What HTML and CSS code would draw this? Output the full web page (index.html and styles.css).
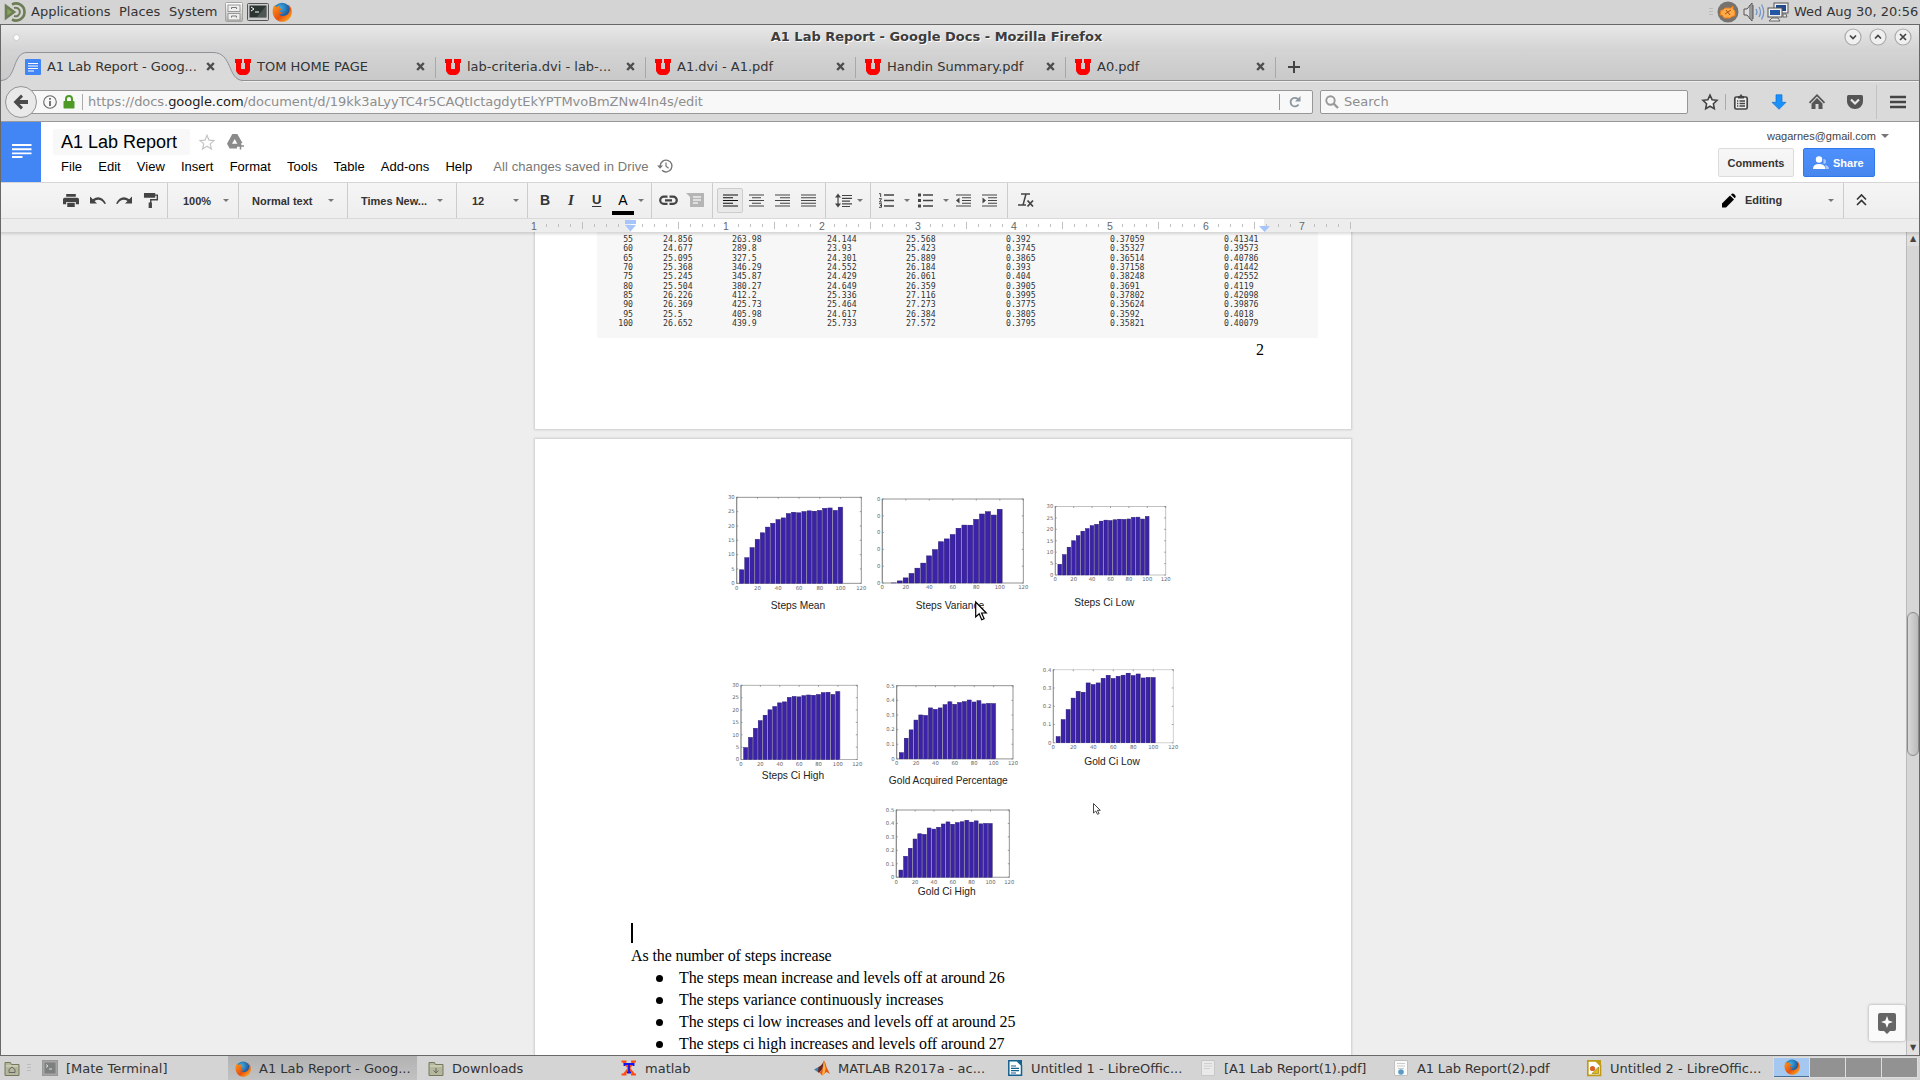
FILE: index.html
```html
<!DOCTYPE html>
<html lang="en">
<head>
<meta charset="utf-8">
<title>A1 Lab Report - Google Docs</title>
<link rel="stylesheet" href="styles.css">
</head>
<body>
<svg class="defs" width="0" height="0">
  <defs>
    <linearGradient id="steel" x1="0" y1="0" x2="0" y2="1"><stop offset="0" stop-color="#fff"/><stop offset="1" stop-color="#b5b5b0"/></linearGradient>
    <radialGradient id="globe" cx=".4" cy=".3" r=".7"><stop offset="0" stop-color="#3bb0ea"/><stop offset="1" stop-color="#153a7c"/></radialGradient>
    <linearGradient id="fox" x1="0" y1="0" x2="1" y2="1"><stop offset="0" stop-color="#ff9a1a"/><stop offset=".55" stop-color="#e8500f"/><stop offset="1" stop-color="#ffc62b"/></linearGradient>
    <symbol id="firefox" viewBox="0 0 20 20">
      <circle cx="10" cy="9.5" r="8.8" fill="url(#globe)"/>
      <path d="M2.2 3.2C.4 6 .1 10.500 1.500 13.800 3.200 17.800 6.500 19.800 10.300 19.800c5.500 0 9.500-4.300 9.500-9.600 0-3-1.200-5.800-3.400-7.600 1.300 2.400 1.400 4.400 1 6.200-.5 3-3 5.200-6 5.200-2.100 0-3.800-.9-4.600-2.300 1.500.8 3.300.3 4.500-.9-2.300.2-3.600-.8-3.900-2.200.9-.4 2-.5 2.300-1.300C8.700 6.600 7.300 6.200 6.800 5.600c.1-.9.4-1.600 1-2.200-1.300.2-2.300.8-3 1.600-.9-.1-2-.8-2.600-1.800z" fill="url(#fox)"/>
    </symbol>
    <symbol id="blocku" viewBox="0 0 16 16"><path d="M0 0h7v4H6v6h4V4H9V0h7v4h-1v8l-2 3-2 1H5l-2-1-2-3V4H0z" fill="#f00"/></symbol>
    <symbol id="close" viewBox="0 0 9 9"><path d="M1.200 1l6.600 7M7.800 1L1.200 8" stroke="#4d4d4d" stroke-width="2.400"/></symbol>
    <symbol id="folder" viewBox="0 0 16 16"><path d="M1 2.500h5.500l1 2H15v11H1z" fill="#b5b79c" stroke="#75785f"/><path d="M2 6h12" stroke="#dcddc8"/></symbol>
  </defs>
</svg>

<header class="panel">
  <svg class="mate" viewBox="0 0 20 20"><path d="M1 4l8 6-8 6z" fill="#87a556"/><path d="M1 4l8 6-8 6z M7 2.500A8.500 8.500 0 1 1 7 17.500" fill="none" stroke="#6d7d55" stroke-width="2.600"/><path d="M9 6a4.300 4.300 0 1 1 0 8" fill="none" stroke="#6d7d55" stroke-width="2"/></svg>
  <span class="m1">Applications</span><span class="m2">Places</span><span class="m3">System</span>
  <svg class="cab" viewBox="0 0 18 20"><rect x=".5" y=".5" width="17" height="19" rx="1" fill="url(#steel)" stroke="#a5a5a0"/><rect x="3" y="3" width="12" height="6.500" fill="#eee" stroke="#999"/><rect x="3" y="11.500" width="12" height="6.500" fill="#eee" stroke="#999"/><path d="M6.500 7V5.500h5V7M6.500 15.500V14h5v1.500" fill="none" stroke="#777"/></svg>
  <svg class="term" viewBox="0 0 22 18"><rect x=".5" y=".5" width="21" height="17" rx="1" fill="#ccc" stroke="#555"/><rect x="2.500" y="2.500" width="17" height="12" fill="#2b3532"/><path d="M4 4l3 2-3 2M8 9h4" stroke="#fff" fill="none"/><path d="M10 14L19 3v11z" fill="#4c5754"/></svg>
  <svg class="ff" width="20" height="20"><use href="#firefox"/></svg>
  <span class="grow"></span>
  <i class="grip"></i>
  <svg class="tray1" viewBox="0 0 22 22"><circle cx="11" cy="11" r="10.500" fill="#76736f"/><path d="M4 9h2l2-2h6l2-2v3l2 2v5h-2l-3 2H7l-2-3H3z" fill="#ffab4c" stroke="#f07c12"/><path d="M8 13l6-4M9 9l4 5" stroke="#a6520d"/></svg>
  <svg class="tray2" viewBox="0 0 22 20"><path d="M1 7h3l5-6v18l-5-6H1z" fill="#ddd" stroke="#555"/><path d="M7 3v14M10 3v14" stroke="#555"/><path d="M13 7q2 3 0 6M16 5q3 5 0 10M18.500 2.500q4.500 7.500 0 15" fill="none" stroke="#7395c8" stroke-width="1.300"/></svg>
  <svg class="tray3" viewBox="0 0 22 20"><rect x="7" y="1" width="14" height="10" fill="#eee" stroke="#555"/><rect x="9" y="3" width="10" height="6" fill="#1f4a8e"/><rect x="1" y="6" width="14" height="9" fill="#eee" stroke="#555"/><rect x="3" y="8" width="10" height="5" fill="#2157a5"/><path d="M5 16h6l2 3H2zM16 12h3l1 3h-4z" fill="#e8e8e8" stroke="#666"/></svg>
  <span class="clock">Wed Aug 30, 20:56</span>
</header>

<main class="window">
  <div class="chrome">
    <div class="titlebar">
      <i class="dot"></i>
      <h1>A1 Lab Report - Google Docs - Mozilla Firefox</h1>
      <div class="wbtns">
        <svg viewBox="0 0 18 18"><circle cx="9" cy="9" r="8" class="wb"/><path d="M6 7.500l3 3 3-3" class="wg"/></svg>
        <svg viewBox="0 0 18 18"><circle cx="9" cy="9" r="8" class="wb"/><path d="M6 10.500l3-3 3 3" class="wg"/></svg>
        <svg viewBox="0 0 18 18"><circle cx="9" cy="9" r="8" class="wb"/><path d="M6 6l6 6M12 6l-6 6" class="wg"/></svg>
      </div>
    </div>
    <div class="tabs">
      <svg class="tabshape" viewBox="0 0 242 30"><path d="M0 28.500C16 28 11 .5 26 .5H212C232 .5 226 28 242 28.500V30H0z" fill="#dadada"/><path d="M0 28.500C16 28 11 .5 26 .5H212C232 .5 226 28 242 28.500" fill="none" stroke="#8e9298"/></svg>
      <div class="tab first-tab"><svg class="fav" viewBox="0 0 16 16"><rect width="16" height="16" rx="1" fill="#4285f4"/><path d="M3 4.500h10M3 7h10M3 9.500h10M3 12h6" stroke="#fff"/></svg><span>A1 Lab Report - Goog...</span><svg class="x"><use href="#close"/></svg></div>
      <div class="tab"><svg class="fav"><use href="#blocku"/></svg><span>TOM HOME PAGE</span><svg class="x"><use href="#close"/></svg></div>
      <div class="tab sep"><svg class="fav"><use href="#blocku"/></svg><span>lab-criteria.dvi - lab-...</span><svg class="x"><use href="#close"/></svg></div>
      <div class="tab sep"><svg class="fav"><use href="#blocku"/></svg><span>A1.dvi - A1.pdf</span><svg class="x"><use href="#close"/></svg></div>
      <div class="tab sep"><svg class="fav"><use href="#blocku"/></svg><span>Handin Summary.pdf</span><svg class="x"><use href="#close"/></svg></div>
      <div class="tab sep"><svg class="fav"><use href="#blocku"/></svg><span>A0.pdf</span><svg class="x"><use href="#close"/></svg></div>
      <div class="tab sep plus"><svg viewBox="0 0 12 12"><path d="M6 0v12M0 6h12" stroke="#444" stroke-width="2"/></svg></div>
    </div>
  </div>

  <nav class="navbar">
    <svg class="back" viewBox="0 0 32 32"><circle cx="16" cy="16" r="15.500" fill="#e9e9e9" stroke="#939393"/><path d="M16 8.500L8.500 16l7.500 7.500 2-2.200-3.400-3.400H23v-3.800h-8.400L18 10.700z" fill="#4a4a4a"/></svg>
    <div class="url">
      <svg class="info" viewBox="0 0 14 14"><circle cx="7" cy="7" r="6.300" fill="none" stroke="#666" stroke-width="1.100"/><path d="M7 6v5M7 3v1.800" stroke="#555" stroke-width="1.600"/></svg>
      <svg class="lock" viewBox="0 0 12 14"><path d="M3 7V4q0-3 3-3t3 3v3" fill="none" stroke="#4d9a26" stroke-width="2"/><rect x=".5" y="6" width="11" height="7.500" rx=".8" fill="#4d9a26"/></svg>
      <i class="vline"></i>
      <span class="addr">https://docs.<b>google.com</b>/document/d/19kk3aLyyTC4r5CAQtIctagdytEkYPTMvoBmZNw4In4s/edit</span>
      <div class="reload"><svg viewBox="0 0 12 12"><path d="M9.500 8.500A4.300 4.300 0 1 1 8.800 3" fill="none" stroke="#8b969e" stroke-width="1.800"/><path d="M11.500 0v5.500H6z" fill="#8b969e"/></svg></div>
    </div>
    <div class="search"><svg viewBox="0 0 14 14"><circle cx="5.500" cy="5.500" r="4.200" fill="none" stroke="#999" stroke-width="1.900"/><path d="M8.500 8.500l4.500 4.500" stroke="#999" stroke-width="2.400"/></svg><span>Search</span></div>
    <div class="nicons">
      <svg class="n1" viewBox="0 0 16 16"><path d="M8 1.200l2.100 4.500 4.900.6-3.600 3.400.9 4.900L8 12.200l-4.300 2.400.9-4.900L1 6.300l4.900-.6z" fill="#eee" stroke="#444" stroke-width="1.600"/></svg>
      <i class="vline s1"></i>
      <svg class="n2" viewBox="0 0 16 16"><rect x="1.800" y="3" width="12.400" height="12" rx="1.500" fill="#eee" stroke="#444" stroke-width="1.700"/><path d="M5 4.500V2h1.500L8 0l1.500 2H11v2.500z" fill="#444"/><path d="M6.500 7H12M6.500 9.500H12M6.500 12H12M4 7h1.300M4 9.500h1.300M4 12h1.300" stroke="#444" stroke-width="1.300"/></svg>
      <svg class="n3" viewBox="0 0 16 16"><path d="M5 .8h6v7.500h4L8 15.300 1 8.300h4z" fill="#1990fa" stroke="#0c73d6" stroke-width=".7"/></svg>
      <svg class="n3" viewBox="0 0 16 16"><path d="M.5 8.800L8 1.200l7.500 7.600" fill="none" stroke="#555" stroke-width="1.800"/><path d="M2.500 9.500L8 4l5.500 5.500V15h-4v-5h-3v5h-4z" fill="#555"/></svg>
      <svg class="n3" viewBox="0 0 16 16"><path d="M1.500 1h13q1.500 0 1.500 1.500V7c0 4.500-3.500 8-8 8s-8-3.500-8-8V2.500Q0 1 1.500 1z" fill="#555"/><path d="M4 5.500l4 4 4-4" fill="none" stroke="#e6e6e6" stroke-width="2.200"/></svg>
      <i class="vline s2"></i>
      <svg class="n4" viewBox="0 0 16 16"><path d="M0 3h16M0 8h16M0 13h16" stroke="#444" stroke-width="2.700"/></svg>
    </div>
  </nav>

  <section class="docshead">
    <div class="logo"><svg viewBox="0 0 20 14"><path d="M0 1h19.500M0 5.200h19.500M0 9.400h19.500M0 13h10.500" stroke="#fff" stroke-width="1.900"/></svg></div>
    <div class="headmain">
      <div class="titlerow">
        <div class="doctitle">A1 Lab Report</div>
        <svg class="star" viewBox="0 0 16 16"><path d="M8 1.300l2 4.900 5 .4-3.800 3.300 1.200 5L8 12.200l-4.400 2.700 1.200-5L1 6.600l5-.4z" fill="none" stroke="#c4c4c4" stroke-width="1.200"/></svg>
        <svg class="drive" viewBox="0 0 18 16"><path d="M5.300 0h5L15.500 9H13v3h-3v2.500H2.700L0 9.800z" fill="#8b8b8b"/><path d="M7.700 5L5 9.800h5.400z" fill="#fff"/><path d="M13.500 8.500v7M10 12h7" stroke="#8b8b8b" stroke-width="1.600"/></svg>
      </div>
      <div class="menus"><span>File</span><span>Edit</span><span>View</span><span>Insert</span><span>Format</span><span>Tools</span><span>Table</span><span>Add-ons</span><span>Help</span><em>All changes saved in Drive</em>
        <svg viewBox="0 0 16 14"><path d="M3.200 7A5.900 5.900 0 1 1 5 11.300" fill="none" stroke="#777" stroke-width="1.400"/><path d="M0 6.500h6L3.100 9.800z" fill="#777"/><path d="M9 3.500v3.700l2.600 2" fill="none" stroke="#777" stroke-width="1.200"/></svg></div>
    </div>
    <div class="account">
      <div class="mail">wagarnes@gmail.com<i class="tri"></i></div>
      <div class="btns"><div class="btn">Comments</div><div class="btn share"><svg viewBox="0 0 16 13"><path d="M10.500 3a2.500 2.500 0 0 1 0 5zM12 9q4 .500 4 4h-3z" fill="#a9c7ff"/><circle cx="6" cy="3.500" r="3.200" fill="#fff"/><path d="M0 13q0-5 6-5t6.500 5z" fill="#fff"/></svg>Share</div></div>
    </div>
  </section>

  <section class="toolbar">
    <div class="grp g1">
      <svg viewBox="0 0 15 14"><path d="M3 1h9v2.600H3zM1.500 4.400h12Q15 4.400 15 6v4.500h-3V8.300H3v2.200H0V6q0-1.600 1.500-1.600zM4 9.200h7V13H4z" fill="#444"/></svg>
      <svg viewBox="0 0 16 12"><path d="M0 2v7h7L4.500 6.600Q10 3 14.500 9.500L16 9Q11-.5 2.800 4.700z" fill="#444"/></svg>
      <svg viewBox="0 0 16 12"><path d="M16 2v7H9l2.500-2.400Q6 3 1.500 9.500L0 9Q5-.5 13.200 4.700z" fill="#444"/></svg>
      <svg viewBox="0 0 15 16"><path d="M0 0h12v1.500h3V8H8v2H8.500v6H5V10h1.500V6.500h7V3H12v2H0z" fill="#444"/></svg>
    </div>
    <div class="grp g2"><b>100%</b><i class="tri"></i></div>
    <div class="grp g3"><b>Normal text</b><i class="tri"></i></div>
    <div class="grp g4"><b>Times New...</b><i class="tri"></i></div>
    <div class="grp g5"><b>12</b><i class="tri"></i></div>
    <div class="grp g6"><span class="fb">B</span><span class="fi">I</span><span class="fu">U</span><span class="fa">A</span><i class="tri"></i></div>
    <div class="grp g7">
      <svg class="link" viewBox="0 0 19 10"><path d="M8.500 1.200H4.800a3.600 3.600 0 0 0 0 7.200h3.700M10.500 1.200h3.700a3.600 3.600 0 0 1 0 7.200h-3.700M6 4.800h7" fill="none" stroke="#444" stroke-width="2.200"/></svg>
      <svg class="note" viewBox="0 0 18 15"><path d="M0 0h18v14H4V4z" fill="#b5b5b5"/><path d="M7 4h8M7 7h8M7 10h5" stroke="#eee" stroke-width="1.300"/></svg>
    </div>
    <div class="grp g8">
      <span class="al on"><svg viewBox="0 0 15 13"><path d="M0 1h15M0 3.750h10M0 6.500h15M0 9.250h10M0 12h15" stroke="#111" stroke-width="1.200"/></svg></span>
      <span class="al"><svg viewBox="0 0 15 13"><path d="M0 1h15M3 3.750h9M0 6.500h15M3 9.250h9M0 12h15" class="ln"/></svg></span>
      <span class="al"><svg viewBox="0 0 15 13"><path d="M0 1h15M5 3.750h10M0 6.500h15M5 9.250h10M0 12h15" class="ln"/></svg></span>
      <span class="al"><svg viewBox="0 0 15 13"><path d="M0 1h15M0 3.750h15M0 6.500h15M0 9.250h15M0 12h15" class="ln"/></svg></span>
    </div>
    <div class="grp g9"><svg viewBox="0 0 17 14"><path d="M7 2h10M7 4.800h10M7 7.600h8M7 10.400h10M7 13h8M3 2v10" class="ln"/><path d="M0 4l3-4 3 4zM0 10l3 4 3-4z" fill="#444"/></svg><i class="tri"></i></div>
    <div class="grp g10">
      <svg viewBox="0 0 15 15"><path d="M5 2h10M5 7.500h10M5 13h10" stroke="#444" stroke-width="1.400"/><path d="M0 .7h1.700V4M0 5.700h2.600L.5 9h2.500M0 10.700h2.500v3.600H0M1 12.500h1.500" fill="none" stroke="#444"/></svg><i class="tri"></i>
      <svg viewBox="0 0 15 15"><path d="M5 2h10M5 7.500h10M5 13h10" stroke="#444" stroke-width="1.400"/><path d="M0 .5h3v3H0zM0 6h3v3H0zM0 11.500h3v3H0z" fill="#444"/></svg><i class="tri"></i>
      <svg class="out" viewBox="0 0 15 13"><path d="M0 1h15M6 3.750h9M6 6.500h9M6 9.250h9M0 12h15" class="ln"/><path d="M3.500 3.500v6L0 6.500z" fill="#444"/></svg>
      <svg class="in" viewBox="0 0 15 13"><path d="M0 1h15M6 3.750h9M6 6.500h9M6 9.250h9M0 12h15" class="ln"/><path d="M.5 3.500v6L4 6.500z" fill="#444"/></svg>
    </div>
    <div class="grp g11"><svg viewBox="0 0 16 15"><path d="M3 1h9M8 1L5 12M0 12h8" stroke="#444" stroke-width="1.500"/><path d="M9.500 7.500l5.500 6M15 7.500l-5.500 6" stroke="#444" stroke-width="1.800"/></svg></div>
    <div class="grp g12"><svg viewBox="0 0 14 14"><path d="M0 14v-4l8-8 4 4-8 8zM9 1.200q1.500-2 3-.7l1.400 1.400q1 1.500-.6 2.900z" fill="#000"/></svg><b>Editing</b><i class="tri"></i></div>
    <div class="g13"><svg viewBox="0 0 11 12"><path d="M1 5.500l4.500-4.500L10 5.500M1 11l4.500-4.500L10 11" fill="none" stroke="#333" stroke-width="1.600"/></svg></div>
  </section>

  <div class="ruler"><svg id="ruler" width="830" height="13"></svg></div>

  <div class="viewport">
    <div class="canvas">
      <article class="page first">
        <div class="output">
          <table class="results">
            <colgroup><col class="c1"><col class="c2"><col class="c3"><col class="c4"><col class="c5"><col class="c6"><col class="c7"><col></colgroup>
            <tr><td>55<td>24.856<td>263.98<td>24.144<td>25.568<td>0.392<td>0.37059<td>0.41341</tr>
            <tr><td>60<td>24.677<td>289.8<td>23.93<td>25.423<td>0.3745<td>0.35327<td>0.39573</tr>
            <tr><td>65<td>25.095<td>327.5<td>24.301<td>25.889<td>0.3865<td>0.36514<td>0.40786</tr>
            <tr><td>70<td>25.368<td>346.29<td>24.552<td>26.184<td>0.393<td>0.37158<td>0.41442</tr>
            <tr><td>75<td>25.245<td>345.87<td>24.429<td>26.061<td>0.404<td>0.38248<td>0.42552</tr>
            <tr><td>80<td>25.504<td>380.27<td>24.649<td>26.359<td>0.3905<td>0.3691<td>0.4119</tr>
            <tr><td>85<td>26.226<td>412.2<td>25.336<td>27.116<td>0.3995<td>0.37802<td>0.42098</tr>
            <tr><td>90<td>26.369<td>425.73<td>25.464<td>27.273<td>0.3775<td>0.35624<td>0.39876</tr>
            <tr><td>95<td>25.5<td>405.98<td>24.617<td>26.384<td>0.3805<td>0.3592<td>0.4018</tr>
            <tr><td>100<td>26.652<td>439.9<td>25.733<td>27.572<td>0.3795<td>0.35821<td>0.40079</tr>
          </table>
        </div>
        <div class="pageno">2</div>
      </article>
      <article class="page second">
        <svg id="charts" class="charts" viewBox="720 480 480 430" width="480" height="430"></svg>
        <div class="caret"></div>
        <p>As the number of steps increase</p>
        <ul>
          <li>The steps mean increase and levels off at around 26</li>
          <li>The steps variance continuously increases</li>
          <li>The steps ci low increases and levels off at around 25</li>
          <li>The steps ci high increases and levels off around 27</li>
        </ul>
      </article>
    </div>
    <div class="scroll"><i class="sb">▲</i><i class="thumb"></i><i class="sb">▼</i></div>
    <div class="explore"><svg viewBox="0 0 18 21"><path d="M2 0h14q2 0 2 2v14q0 2-2 2h-4l-3 3-3-3H2q-2 0-2-2V2Q0 0 2 0z" fill="#666"/><path d="M9 3l1.600 4.400L15 9l-4.400 1.600L9 15l-1.600-4.400L3 9l4.400-1.600z" fill="#fff"/></svg></div>
    <svg class="cursor" viewBox="0 0 12 20"><path d="M.7 1v15l3.500-3.200 2.500 6 2.400-1-2.500-5.800h4.700z" fill="#fff" stroke="#000" stroke-width="1.200"/></svg>
  </div>
</main>

<footer class="taskbar">
  <svg class="home"><use href="#folder"/><path d="M5 9.500l3-2.500 3 2.500v3H5z" fill="none" stroke="#666"/></svg>
  <i class="grip"></i>
  <div class="task"><svg viewBox="0 0 16 16"><rect x=".5" y=".5" width="15" height="15" fill="#a5a5a5" stroke="#999"/><rect x="2.500" y="2.500" width="11" height="11" fill="#7c817f"/><path d="M4 4.500l2 1.500-2 1.500M7 9h3" stroke="#ddd" fill="none"/></svg><span>[Mate Terminal]</span></div>
  <div class="task active"><svg><use href="#firefox"/></svg><span>A1 Lab Report - Goog...</span></div>
  <div class="task"><svg><use href="#folder"/><path d="M8 8v5M5.800 10.500L8 13l2.200-2.500" fill="none" stroke="#666"/></svg><span>Downloads</span></div>
  <div class="task"><svg viewBox="0 0 16 16"><path d="M2.500 1.500l10.500 13M13 1.500L3 14.500M.5 1.500h5M10 1.500h5M.5 14.500h5M10 14.500h5" stroke="#ff4b12" stroke-width="2.200"/><path d="M8 4.500V13M3.500 6V4h9v2M6 12.500h4" fill="none" stroke="#1414ee" stroke-width="1.900"/></svg><span>matlab</span></div>
  <div class="task"><svg viewBox="0 0 16 16"><path d="M0 9.500L4.500 7 7 9.500l-3 2.700z" fill="#3f7fa8"/><path d="M4.500 7Q8 5.500 10 .5L8.500 9 5 13 4 12z" fill="#6a2622"/><path d="M10 .5Q12 3 12.500 7L16 14l-3.500-2L8 15.500 5.500 12.500 8.500 9z" fill="#e0591a"/><path d="M10 .5l1.700 8-1 4.500L8 15.500 9 8z" fill="#ffb13a"/></svg><span>MATLAB R2017a - ac...</span></div>
  <div class="task"><svg viewBox="0 0 16 16"><path d="M1.800.8H10l4.500 4.500v10H1.800z" fill="#fff" stroke="#136190" stroke-width="1.500"/><path d="M10 0h5v5.500z" fill="#136190"/><path d="M4 6h5M4 8.300h8M4 10.600h8M4 13h5" stroke="#136190" stroke-width="1.200"/></svg><span>Untitled 1 - LibreOffic...</span></div>
  <div class="task tight"><svg viewBox="0 0 16 16"><path d="M1.500.5h13v15h-13z" fill="#e9e9e9" stroke="#c7c7c7"/><path d="M4 3.500h8M4 6h8M4 8.500h6" stroke="#d0d0d0"/></svg><span>[A1 Lab Report(1).pdf]</span></div>
  <div class="task tight"><svg viewBox="0 0 16 16"><path d="M1.500.5h13v15h-13z" fill="#fafafa" stroke="#c0c0c0"/><path d="M4 3.500h8M4 6h8M5 8.500h6" stroke="#ccc"/><circle cx="8" cy="12" r="2.800" fill="#5a9bc8"/></svg><span>A1 Lab Report(2).pdf</span></div>
  <div class="task"><svg viewBox="0 0 16 16"><path d="M1.800.8H10l4.500 4.500v10H1.800z" fill="#fff" stroke="#c09a10" stroke-width="1.700"/><path d="M10 0h5v5.500z" fill="#c09a10"/><circle cx="6.500" cy="8.500" r="2.600" fill="#d8622b"/><path d="M12.500 7v6.500H6z" fill="#e3bb18" stroke="#8d6d00" stroke-width=".6"/></svg><span>Untitled 2 - LibreOffic...</span></div>
  <div class="spaces"><i class="cur"><svg width="16" height="16"><use href="#firefox"/></svg></i><i></i><i></i><i></i></div>
</footer>
<script src="charts.js"></script>
</body>
</html>
```
FILE: charts.js
```js
const mean = [4.8, 9, 12.5, 15.4, 17.7, 19.7, 21, 22.3, 22.9, 24.4, 24.856, 24.677, 25.095, 25.368, 25.245, 25.504, 26.226, 26.369, 25.5, 26.652];
const variance = [0, 2, 14, 32, 58, 90, 120, 163, 200, 247, 263.98, 289.8, 327.5, 346.29, 345.87, 380.27, 412.2, 425.73, 405.98, 439.9];
const ciLow = [4.8, 9, 12.3, 15.1, 17.3, 19.3, 20.4, 21.7, 22.3, 23.7, 24.144, 23.93, 24.301, 24.552, 24.429, 24.649, 25.336, 25.464, 24.617, 25.733];
const ciHigh = [4.9, 9, 12.7, 15.8, 18, 20.2, 21.5, 23, 23.4, 25.2, 25.568, 25.423, 25.889, 26.184, 26.061, 26.359, 27.116, 27.273, 26.384, 27.572];
const gold = [.044, .143, .2, .267, .302, .298, .35, .34, .35, .372, .392, .3745, .3865, .393, .404, .3905, .3995, .3775, .3805, .3795];
const goldLow = [.035, .128, .183, .246, .283, .278, .329, .32, .329, .354, .37059, .35327, .36514, .37158, .38248, .3691, .37802, .35624, .3592, .35821];
const goldHigh = [.055, .157, .217, .286, .325, .32, .368, .36, .373, .398, .41341, .39573, .40786, .41442, .42552, .4119, .42098, .39876, .4018, .40079];
const thirty = ['0', '5', '10', '15', '20', '25', '30'];
const half = ['0', '0.1', '0.2', '0.3', '0.4', '0.5'];

const charts = [
  { box: [736.7, 497.3, 861.3, 583.3], max: 30, y: thirty, data: mean, name: 'Steps Mean', at: [798, 609.3], axis: '#888' },
  { box: [882.3, 499, 1023.3, 583], max: 500, y: ['0', '0', '0', '0', '0', '0'], data: variance, name: 'Steps Variance', at: [950, 609], axis: '#888' },
  { box: [1055.3, 506.5, 1165.7, 575], max: 30, y: thirty, data: ciLow, name: 'Steps Ci Low', at: [1104.3, 605.5], axis: '#bbb' },
  { box: [741, 685.3, 857.3, 759.5], max: 30, y: thirty, data: ciHigh, name: 'Steps Ci High', at: [793, 778.5], axis: '#aaa' },
  { box: [896.7, 685.7, 1013, 758.9], max: .5, y: half, data: gold, name: 'Gold Acquired Percentage', at: [948.3, 783.7], axis: '#888' },
  { box: [1053.3, 669.7, 1173.3, 742.8], max: .4, y: half.slice(0, 5), data: goldLow, name: 'Gold Ci Low', at: [1112, 764.7], axis: '#ccc' },
  { box: [896.3, 810, 1009.3, 877.2], max: .5, y: half, data: goldHigh, name: 'Gold Ci High', at: [946.7, 895.2], axis: '#888' }
];

let out = '';
for (const c of charts) {
  const [l, t, r, b] = c.box;
  const w = r - l, h = b - t;
  out += `<rect x="${l}" y="${t}" width="${w}" height="${h}" fill="#fff" stroke="${c.axis}" stroke-width=".9"/>`;
  out += `<path d="M${l} ${t}V${b}" stroke="#888" stroke-width=".9"/>`;
  c.data.forEach((v, i) => {
    const bw = w / 24, bh = v / c.max * h;
    const x = l + (i + 1) * bw - bw / 2;
    if (bh > .2) {
      out += `<rect x="${x}" y="${b - bh}" width="${bw}" height="${bh}" fill="#a09da8"/>`;
      out += `<rect x="${x + .35}" y="${b - bh + .3}" width="${bw - 1.1}" height="${bh - .3}" fill="#3b22a8" stroke="#2a1a80" stroke-width=".4"/>`;
    }
  });
  c.y.forEach((s, i) => {
    const y = b - h * i / (c.y.length - 1);
    out += `<text class="tick" x="${l - 2}" y="${y + 1.8}" text-anchor="end">${s}</text>`;
    out += `<path d="M${l} ${y}h1.500M${r} ${y}h-1.500" stroke="#777" stroke-width=".7"/>`;
  });
  for (let i = 0; i <= 6; i++) {
    const x = l + w * i / 6;
    out += `<text class="tick" x="${x}" y="${b + 6.3}" text-anchor="middle">${i * 20}</text>`;
    out += `<path d="M${x} ${t}v1.500" stroke="#777" stroke-width=".7"/>`;
  }
  out += `<text class="name" x="${c.at[0]}" y="${c.at[1]}" text-anchor="middle">${c.name}</text>`;
}
out += '<path d="M1093.500 803.500v9.500l2.300-2 1.700 3.300 1.600-.8-1.700-3.200h2.900z" fill="#fff" stroke="#333" stroke-width=".9"/>';
document.getElementById('charts').innerHTML = out;

let ticks = '<rect x="101" y="0" width="633" height="13" fill="#fff"/>';
for (let i = -8; i <= 60; i++) {
  const x = 100.5 + i * 12;
  if (i % 8 === 0) {
    if (i !== 0) ticks += `<text x="${x - .5}" y="11" text-anchor="middle">${Math.abs(i / 8)}</text>`;
  } else {
    const n = i % 4 === 0 ? 7 : 3;
    ticks += `<path d="M${x} ${i % 4 === 0 ? 3 : 5}v${n}" stroke="#c0c0c0"/>`;
  }
}
ticks += '<path d="M95 1h11v4H95zM95 6h11l-5.500 6.500zM729 7h11l-5.500 6z" fill="#a6c5fb"/>';
document.getElementById('ruler').innerHTML = ticks;
```
FILE: styles.css
```css
* { box-sizing: border-box; }
body { margin: 0; width: 1920px; height: 1080px; overflow: hidden; display: flex; flex-direction: column; font: 13px "DejaVu Sans", sans-serif; color: #333; background: #d4d4d4; }
svg { display: block; flex: none; overflow: visible; }
.defs { position: absolute; }
i { font-style: normal; }
.grow { flex: 1; }

.panel { height: 24px; flex: none; display: flex; align-items: center; background: #d4d4d4; padding: 0 4px 0 5px; white-space: nowrap; }
.panel span { position: relative; top: -1px; }
.mate { width: 20px; height: 20px; margin-right: 6px; }
.m1 { width: 88px; }
.m2 { width: 50px; }
.m3 { width: 56px; }
.cab { width: 18px; height: 20px; margin-right: 4px; }
.term { width: 22px; height: 18px; margin-right: 3px; }
.grip { width: 4px; height: 8px; background: repeating-linear-gradient(#bbb 0 1px, transparent 1px 3px); }
.tray1 { width: 22px; height: 22px; margin: 0 4px 0 4px; }
.tray2 { width: 22px; height: 20px; margin-right: 2px; }
.tray3 { width: 22px; height: 20px; }
.clock { width: 122px; margin-left: 5px; }

.window { height: 1032px; flex: none; border: 1px solid #686868; display: flex; flex-direction: column; background: #eee; }
.chrome { height: 56px; flex: none; background: linear-gradient(#e8e8e8, #d4d4d4 45%, #c9c9c9); border-bottom: 1px solid #909090; }
.titlebar { height: 27px; display: flex; justify-content: space-between; padding: 3px 7px 0 12px; }
.titlebar h1 { margin: 0 0 0 9px; font-size: 13px; line-height: 18px; text-shadow: 1px 1px #fff; color: #3c3c3c; }
.dot { width: 7px; height: 7px; margin-top: 6px; border-radius: 50%; background: #fff; border: 1px solid #ccc; }
.wbtns { display: flex; gap: 7px; }
.wbtns svg { width: 18px; height: 18px; }
.wb { fill: #f0f0f0; stroke: #aaa; stroke-width: 1.2; }
.wg { fill: none; stroke: #444; stroke-width: 1.7; }
.tabs { height: 29px; display: flex; position: relative; padding-left: 14px; }
.tabshape { position: absolute; left: 0; top: 0; width: 242px; height: 30px; }
.tab { width: 210px; height: 29px; display: flex; align-items: center; padding: 1px 0 1px 10px; position: relative; white-space: nowrap; }
.tab.sep::before { content: ""; position: absolute; left: 0; top: 5px; width: 1px; height: 21px; background: #a8a8a8; }
.tab span { width: 159px; margin-left: 6px; }
.first-tab span { letter-spacing: -.08px; }
.fav { width: 16px; height: 16px; }
.x { width: 9px; height: 9px; }
.tab.plus { padding-left: 13px; width: 40px; }
.plus svg { width: 12px; height: 12px; }

.navbar { height: 41px; flex: none; display: flex; align-items: center; background: #dadada; border-bottom: 1px solid #999; border-top: 1px solid #eee; padding-left: 4px; }
.back { width: 32px; height: 32px; position: relative; z-index: 1; }
.url { width: 1284px; height: 24px; margin-left: -8px; background: #f8f8f8; border: 1px solid #979797; border-radius: 0 2px 2px 0; display: flex; align-items: center; padding-left: 13px; color: #8e8e8e; }
.info { width: 14px; height: 14px; margin-right: 6px; }
.lock { width: 12px; height: 14px; margin-right: 7px; }
.vline { width: 1px; height: 16px; background: #aaa; }
.addr { width: 1191px; margin-left: 5px; white-space: nowrap; letter-spacing: -.055px; }
.addr b { font-weight: normal; color: #222; }
.reload { border-left: 1px solid #979797; height: 16px; padding: 2px 0 0 9px; }
.reload svg { width: 12px; height: 12px; }
.search { width: 368px; height: 24px; margin-left: 7px; background: #f8f8f8; border: 1px solid #979797; border-radius: 2px; display: flex; align-items: center; padding-left: 4px; color: #8e8e8e; }
.search svg { width: 14px; height: 14px; margin-right: 5px; }
.nicons { display: flex; align-items: center; }
.nicons svg { width: 16px; height: 16px; }
.n1 { margin-left: 14px; }
.n2 { margin-left: 7px; }
.n3 { margin-left: 22px; }
.n4 { margin-left: 13px; }
.s1 { margin-left: 7px; }
.s2 { margin-left: 13px; height: 34px; background: #c2c2c2; }

.docshead { height: 60px; flex: none; background: #fff; display: flex; font-family: "Liberation Sans", Arial, sans-serif; color: #000; }
.logo { width: 40px; background: #4285f4; padding: 22px 0 0 11px; }
.logo svg { width: 20px; height: 14px; }
.headmain { flex: 1; padding: 7px 0 0 12px; }
.titlerow { display: flex; align-items: center; height: 26px; }
.doctitle { width: 137px; height: 26px; padding-left: 8px; font-size: 18px; line-height: 27px; background: #f8f8f8; border-radius: 2px; }
.star { width: 16px; height: 16px; margin-left: 9px; }
.drive { width: 18px; height: 16px; margin-left: 12px; }
.menus { display: flex; align-items: center; height: 18px; margin-top: 2px; font-size: 13px; white-space: nowrap; }
.menus span { padding: 0 8.1px; }
.menus em { font-style: normal; color: #777; margin: 0 8px 0 13px; letter-spacing: .08px; }
.menus svg { width: 16px; height: 14px; }
.account { width: 201px; font-size: 11px; }
.mail { margin-top: 7px; padding-left: 49px; height: 14px; line-height: 14px; color: #444; display: flex; align-items: center; }
.mail .tri { border-width: 4px 4px 0; margin-left: 5px; }
.btns { display: flex; gap: 9px; margin-top: 5px; }
.btn { width: 76px; height: 29px; border: 1px solid #dcdcdc; border-radius: 2px; background: linear-gradient(#f7f7f7, #f1f1f1); font-weight: bold; line-height: 28px; text-align: center; color: #333; }
.share { width: 72px; display: flex; align-items: center; gap: 4px; padding-left: 9px; color: #fff; background: linear-gradient(#4d90fe, #4787ed); border-color: #3079ed; }
.share svg { width: 16px; height: 13px; }

.toolbar { height: 37px; flex: none; display: flex; background: linear-gradient(#f5f5f5, #eee); border-top: 1px solid #d5d5d5; border-bottom: 1px solid #d9d9d9; font: 11px "Liberation Sans", Arial, sans-serif; color: #333; }
.grp, .g13 { display: flex; align-items: center; padding-bottom: 1px; }
.grp { border-right: 1px solid #ccc; flex: none; }
.grp svg { height: 15px; }
.tri { width: 0; height: 0; border: solid transparent; border-width: 3px 3px 0; border-top-color: #777; }
.g1 { width: 167px; padding-left: 62px; gap: 10.5px; }
.g1 svg { width: 16px; }
.g2 { width: 71px; padding: 0 9px 0 15px; justify-content: space-between; }
.g3 { width: 109px; padding: 0 13px 0 13px; justify-content: space-between; }
.g4 { width: 109px; padding: 0 13px 0 13px; justify-content: space-between; }
.g5 { width: 71px; padding: 0 8px 0 15px; justify-content: space-between; }
.g6 { width: 124px; padding-left: 12px; }
.g6 span { width: 26px; line-height: 16px; }
.fb { font: bold 14px "Liberation Sans", sans-serif; }
.fi { font: italic bold 15px "Liberation Serif", serif; padding-left: 2px; }
.fu { font: bold 13px "Liberation Sans", sans-serif; text-decoration: underline; text-underline-offset: 2px; }
.g6 .fa { width: 22px; height: 24px; font-size: 14px; line-height: 19px; margin: 5px 4px 0 -6px; border-bottom: 4px solid #000; text-align: center; color: #000; }
.g7 { width: 61px; padding-left: 7px; gap: 8px; }
.link { width: 19px; }
.note { width: 18px; }
.g8 { width: 113px; padding-left: 4px; }
.al { width: 26px; height: 25px; display: flex; align-items: center; justify-content: center; border: 1px solid transparent; }
.al.on { border-color: #ccc; background: #e9e9e9; border-radius: 2px; }
.al svg { width: 15px; height: 13px; }
.ln { stroke: #444; stroke-width: 1.2; }
.g9 { width: 45px; padding-left: 9px; }
.g9 svg { width: 17px; margin-right: 5px; }
.g10 { width: 137px; padding-left: 8px; }
.g10 svg { width: 15px; margin-right: 10px; }
.g10 .tri { margin-right: 8px; }
.g10 .out { margin: 0 11px 0 -1px; }
.g10 .in { margin: 0; }
.g11 { flex: 1; border: 0; padding-left: 10px; }
.g11 svg { width: 16px; }
.g12 { width: 122px; }
.g12 svg { width: 14px; }
.g12 b { width: 83px; margin-left: 9px; }
.g13 { width: 75px; padding-left: 12px; }
.g13 svg { width: 11px; height: 12px; }

.ruler { height: 13px; flex: none; background: #ededed; padding-left: 529px; }
.ruler text { font: 10.5px "Liberation Sans", sans-serif; fill: #666; }

.viewport { flex: 1; min-height: 0; display: flex; position: relative; overflow: hidden; }
.viewport::before { content: ""; position: absolute; left: 0; right: 0; top: 0; height: 4px; background: linear-gradient(rgba(0,0,0,.14), transparent); z-index: 1; }
.canvas { width: 1905px; padding-left: 534px; overflow: hidden; }
.page { width: 816px; background: #fff; box-shadow: 0 0 2px 1px #ccc; font: 16px "Liberation Serif", "Times New Roman", serif; color: #000; overflow: hidden; }
.first { height: 197px; }
.second { height: 700px; margin-top: 10px; padding: 41px 0 0 95px; }
.output { width: 721px; height: 106px; margin-left: 62px; padding-top: 3px; background: #f7f7f7; }
.results { table-layout: fixed; width: 721px; border-spacing: 0; font: 8.2px "DejaVu Sans Mono", monospace; color: #333; }
.results tr { height: 9.33px; }
.results td { padding: 0; height: 9.33px; line-height: 9.33px; }
.results td:first-child { text-align: right; padding-right: 30px; }
.c1 { width: 66px; } .c2 { width: 69px; } .c3 { width: 95px; } .c4 { width: 79px; } .c5 { width: 100px; } .c6 { width: 104px; } .c7 { width: 114px; }
.pageno { margin: 3px 0 0 721px; line-height: 18px; }
.charts { margin-left: 90px; }
.tick { font: 5.3px "DejaVu Sans", sans-serif; fill: #666; }
.name { font: 10.2px "Liberation Sans", Arial, sans-serif; fill: #222; }
.caret { width: 2px; height: 20px; background: #000; margin-top: 13px; margin-left: 1px; }
.page p { margin: 2px 0 0 1px; line-height: 22px; letter-spacing: -.11px; }
.page ul { list-style: none; margin: 0; padding: 0 0 0 49px; letter-spacing: -.1px; }
.page li { line-height: 22px; display: flex; align-items: center; }
.page li::before { content: ""; width: 7px; height: 7px; border-radius: 50%; background: #000; margin: 1px 16px 0 -23px; }
.scroll { width: 13px; display: flex; flex-direction: column; justify-content: space-between; background: #d6d6d6; border-left: 1px solid #bbb; position: relative; }
.sb { height: 14px; font-size: 8px; line-height: 14px; text-align: center; color: #444; background: #e0e0e0; }
.thumb { position: absolute; left: 0; top: 380px; width: 12px; height: 144px; background: linear-gradient(90deg, #d8d8d8, #bbb); border: 1px solid #8a8a8a; border-radius: 6px; }
.explore { position: absolute; right: 14px; top: 773px; width: 36px; height: 36px; background: #fafafa; border-radius: 2px; box-shadow: 0 0 3px #999; padding: 8px 9px; }
.explore svg { width: 18px; height: 21px; }
.cursor { position: absolute; left: 974px; top: 369px; width: 12px; height: 20px; }

.taskbar { height: 24px; display: flex; align-items: center; background: #d4d4d4; padding-left: 4px; color: #333; }
.home { width: 16px; height: 16px; }
.taskbar .grip { margin: 0 4px 0 7px; }
.task { width: 193px; height: 24px; display: flex; align-items: center; padding-left: 7px; flex: none; white-space: nowrap; }
.task svg { width: 16px; height: 16px; margin-right: 8px; }
.task.active { background: linear-gradient(#b2b2b2, #c2c2c2); width: 189px; margin-right: 4px; padding-top: 1px; }
.tight span { letter-spacing: -.16px; }
.spaces { position: absolute; right: 2px; bottom: 2px; display: flex; gap: 1px; background: #ddd; padding: 1px; }
.spaces i { width: 35px; height: 19px; background: #929292; }
.spaces .cur { background: #a5c8f0; display: flex; align-items: center; justify-content: center; border-bottom: 1px solid #4a6c99; }
```
